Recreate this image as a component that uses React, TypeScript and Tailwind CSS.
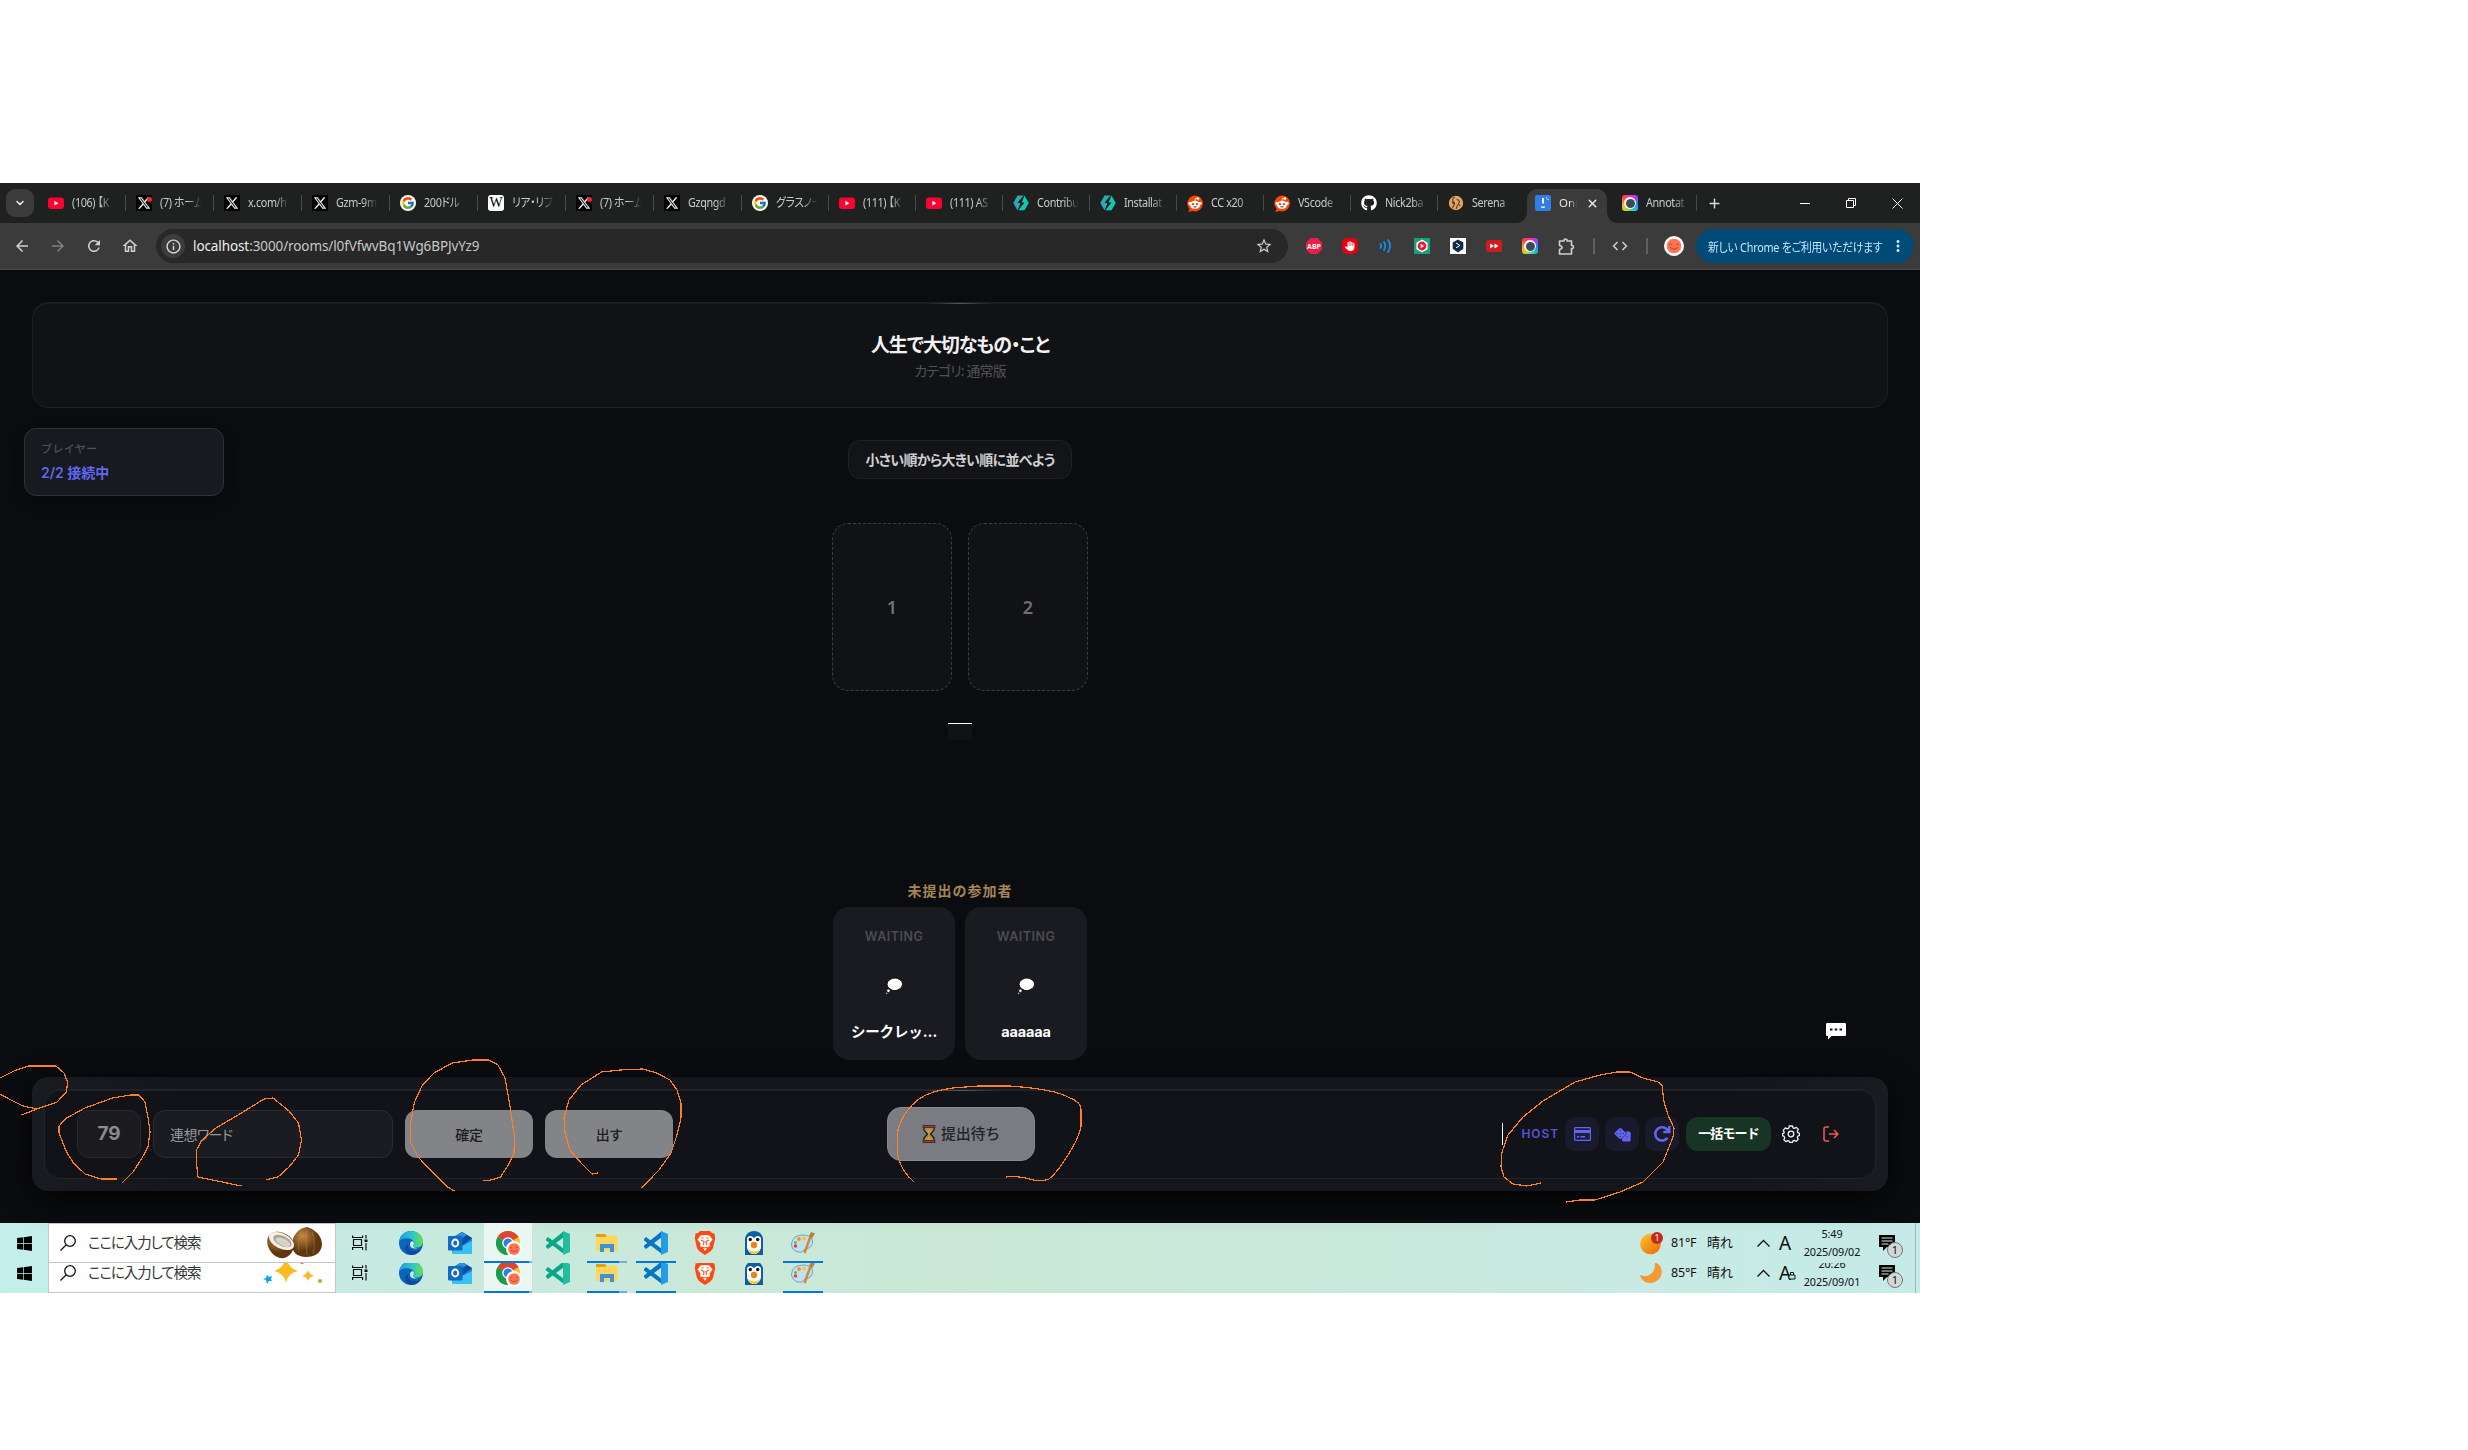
import React from "react";
import { LuX, LuPlus, LuChevronDown } from "react-icons/lu";
import { FaGithub } from "react-icons/fa";
import { FcGoogle } from "react-icons/fc";
import { FaXTwitter, FaWindows, FaHand } from "react-icons/fa6";
import { MdArrowBack, MdArrowForward, MdRefresh, MdOutlineHome, MdInfoOutline, MdStarOutline, MdCode, MdMoreVert } from "react-icons/md";

const ui = "font-['Noto_Sans','Noto_Sans_CJK_JP',sans-serif]";

const YouTube = () => (
  <svg width="16" height="16" viewBox="0 0 16 16"><rect y="2.5" width="16" height="11.5" rx="3" fill="#ff0033" /><path d="M6.4 5.8v4.8l4-2.4z" fill="#fff" /></svg>
);
const XIcon = ({ dot = false }: { dot?: boolean }) => (
  <span className="relative flex size-4 items-center justify-center bg-black">
    <FaXTwitter size={14} color="#e8e8e8" />
    {dot && <span className="absolute right-0 top-0.5 size-[5px] rounded-full bg-[#f4212e]" />}
  </span>
);
const Wiki = () => <span className="flex size-4 items-center justify-center rounded-[3px] bg-white font-['Liberation_Serif',serif] text-[14px] leading-none text-black">W</span>;
const Google = () => <span className="flex size-4 items-center justify-center rounded-full bg-white"><FcGoogle size={14} /></span>;
const Hex = () => (
  <svg width="16" height="16" viewBox="0 0 16 16"><path d="M4.500.500h6L5 7.200h3L4.500 15.200.300 8z" fill="#2fa8b5" /><path d="M11.500.500 8.500 8h2.300L5.500 15.200h6L15.700 8z" fill="#10c9ae" /><path d="M9.500 2.500 4.500 8h3l-1 5.300L11.500 7.500H8.600z" fill="#1f2120" /></svg>
);
const Reddit = () => (
  <svg width="16" height="17" viewBox="0 0 16 17"><path d="M8 .5a8 8 0 1 1-2.6 15.6L1 17l1.600-3A8 8 0 0 1 8 .5z" fill="#ff4500" /><ellipse cx="8" cy="9.800" rx="5.200" ry="4" fill="#fff" /><circle cx="2.900" cy="8.300" r="1.500" fill="#fff" /><circle cx="13.100" cy="8.300" r="1.500" fill="#fff" /><circle cx="11" cy="3.600" r="1.300" fill="#fff" /><path d="M8 6 8.700 3.200l2 .4" stroke="#fff" fill="none" strokeWidth=".8" /><circle cx="6" cy="9.200" r="1.100" fill="#e23b00" /><circle cx="10" cy="9.200" r="1.100" fill="#e23b00" /><path d="M5.800 11.500q2.200 1.800 4.400 0z" fill="#222" /></svg>
);
const Serena = () => (
  <svg width="16" height="16" viewBox="0 0 16 16"><circle cx="8" cy="8" r="7.200" fill="#dfa566" /><path d="M7 2C4 3 4 6 6 7.500S5 11 4.500 13M8.500 4.500c2.500 0 3.500 2 2.300 3.800S9 11 8 14M4 7l2 2M11 9.500l1 1.500" stroke="#5d3b1a" strokeWidth="1.100" fill="none" /></svg>
);
const Online = () => (
  <svg width="16" height="16" viewBox="0 0 16 16"><rect width="16" height="16" rx="2" fill="#2f7fe6" /><rect x="7" y="3" width="2" height="5.500" fill="#fff" /><path d="M6.200 11.500q1.800 1.600 3.600 0M11 3h1M13 4v1" stroke="#fff" strokeWidth="1.200" fill="none" /></svg>
);
const Lens = () => (
  <span className="flex size-4 items-center justify-center rounded-[3px] bg-[conic-gradient(#ff2fa0,#a13cff,#2d8cff,#14d9c8,#b8d92b,#ffb12b,#ff4340,#ff2fa0)]">
    <span className="flex size-3 items-center justify-center rounded-full bg-white"><span className="size-[9px] rounded-full bg-[#3d4b56]" /></span>
  </span>
);

const tabs: [React.ReactNode, string][] = [
  [<YouTube />, "(106) 【K"], [<XIcon dot />, "(7) ホーム"], [<XIcon />, "x.com/h"], [<XIcon />, "Gzm-9m"], [<Google />, "200ドル"],
  [<Wiki />, "リア・リプ"], [<XIcon dot />, "(7) ホーム"], [<XIcon />, "Gzqngd"], [<Google />, "グラスノー"], [<YouTube />, "(111) 【K"],
  [<YouTube />, "(111) AS"], [<Hex />, "Contribu"], [<Hex />, "Installat"], [<Reddit />, "CC x20"], [<Reddit />, "VScode"],
  [<FaGithub size={16} color="#fff" />, "Nick2ba"], [<Serena />, "Serena"],
];

function TabText({ children }: { children: React.ReactNode }) {
  return (
    <span className="ml-2 w-[42px] overflow-hidden whitespace-nowrap text-[12px] text-[#c9cbca] [font-feature-settings:'palt'] [mask-image:linear-gradient(to_right,black_65%,transparent)]">
      <span className="inline-block origin-left scale-x-90 tracking-[-0.4px]">{children}</span>
    </span>
  );
}

function TabStrip() {
  return (
    <div className="flex h-10 items-center bg-[#1f2120]">
      <div className="mx-1.5 flex h-7 w-7 items-center justify-center rounded-[9px] bg-[#3b3b3b]"><LuChevronDown size={12} color="#eee" strokeWidth={3} /></div>
      {tabs.map(([icon, label], i) => (
        <div key={i} className={i < 8 ? "flex h-10 w-[88px] shrink-0 items-center pl-2" : "flex h-10 w-[87px] shrink-0 items-center pl-2"}>
          <span className="flex w-4 shrink-0 justify-center">{icon}</span>
          <TabText>{label}</TabText>
          {i < tabs.length - 1 && <span className="ml-auto mr-0.5 h-4 w-px bg-[#494b4a]" />}
        </div>
      ))}
      <div className="relative mt-1.500 mt-[6px] flex h-[34px] w-20 shrink-0 items-center rounded-t-[10px] bg-[#3b3b3b] pb-1.500 pb-[6px] pl-2">
        <span className="absolute -left-2.5 bottom-0 size-2.5 bg-[radial-gradient(circle_at_0_0,transparent_9.5px,#3b3b3b_10px)]" />
        <span className="absolute -right-2.5 bottom-0 size-2.5 bg-[radial-gradient(circle_at_100%_0,transparent_9.5px,#3b3b3b_10px)]" />
        <Online />
        <span className="ml-2 w-[18px] overflow-hidden whitespace-nowrap text-[11.500px] text-[#e4e4e4] [mask-image:linear-gradient(to_right,black_60%,transparent)]">Onl</span>
        <LuX size={13} color="#eee" strokeWidth={2.6} className="ml-[9px]" />
      </div>
      <div className="flex h-10 w-[90px] items-center pl-[15px]"><Lens /><TabText>Annotat</TabText><span className="ml-auto h-4 w-px bg-[#494b4a]" /></div>
      <LuPlus size={15} color="#ddd" strokeWidth={2.2} className="ml-2.5" />
      <div className="ml-auto flex items-center gap-9 pr-[17px]">
        <span className="h-px w-2.5 bg-white" />
        <svg width="10" height="10" viewBox="0 0 10 10" fill="none" stroke="#fff"><path d="M.5 2.500h7v7h-7zM2.500 2.500v-2h7v7h-2" /></svg>
        <svg width="11" height="11" viewBox="0 0 11 11" fill="none" stroke="#fff"><path d="m.5.5 10 10m0-10-10 10" /></svg>
      </div>
    </div>
  );
}

function Face({ size }: { size: number }) {
  return (
    <svg width={size} height={size} viewBox="0 0 20 20"><circle cx="10" cy="10" r="10" fill="#fff" /><circle cx="10" cy="10" r="7.300" fill="#ff7351" /><path d="M5.800 11.200q4.200 4 8.400 0M5.200 8.400q1.600-1 2.600.4M12.200 8.800q1-1.400 2.600-.4" stroke="#b5412f" strokeWidth="1" fill="none" /></svg>
  );
}

function Toolbar() {
  return (
    <div className="flex h-[47px] items-center border-b border-[#4a4a48] bg-[#3b3b3b]">
      <div className="flex w-[156px] shrink-0 items-center gap-[18px] pl-[13px] text-[#d0d0d0]">
        <MdArrowBack size={18} /><MdArrowForward size={18} color="#808080" /><MdRefresh size={18} /><MdOutlineHome size={18} />
      </div>
      <div className="flex h-[34px] w-[1132px] shrink-0 items-center rounded-full bg-[#282828] pl-[5px] pr-[15px]">
        <span className="flex size-6 items-center justify-center rounded-full bg-[#3c3c3c]"><MdInfoOutline size={17} color="#d8d8d8" /></span>
        <span className="ml-2 whitespace-nowrap text-[13.500px] tracking-[-0.100px] text-[#c7c7c7]"><span className="text-[#eeeeee]">localhost</span>:3000/rooms/l0fVfwvBq1Wg6BPJvYz9</span>
        <MdStarOutline size={18} color="#d0d0d0" className="ml-auto" />
      </div>
      <div className="ml-2 flex shrink-0 items-center">
        <span className="flex w-9 justify-center"><svg width="16" height="16" viewBox="1 1 16 16"><path d="M5.500 1h7L17 5.500v7L12.500 17h-7L1 12.500v-7z" fill="#ed1e45" /><text x="9" y="11.600" textAnchor="middle" fontSize="7" fontWeight="700" fill="#fff">ABP</text></svg></span>
        <span className="flex w-9 justify-center"><span className="flex size-4 items-center justify-center rounded-[5px] bg-[#e60012]"><FaHand size={10} color="#fff" /></span></span>
        <span className="flex w-9 justify-center"><svg width="14" height="14" viewBox="0 0 14 14" fill="none" stroke="#118df0" strokeWidth="1.800" strokeLinecap="round"><path d="M1.500 5q1.200 2 0 4M5 3q2.600 4 0 8M9 1q4.200 6 0 12" /></svg></span>
        <span className="flex w-9 justify-center"><svg width="16" height="16" viewBox="0 0 16 16"><rect width="16" height="16" fill="#10a37f" /><path d="m8 1.500 5.600 3.200v6.600L8 14.500l-5.600-3.200V4.700z" fill="#fff" /><circle cx="8" cy="8" r="4.400" fill="#f01432" /><path d="M6.700 5.800v4.400L10.300 8z" fill="#fff" /></svg></span>
        <span className="flex w-9 justify-center"><svg width="16" height="16" viewBox="0 0 16 16"><rect width="16" height="16" fill="#fff" /><path d="m8 1.500 5.300 3v6.200L8 14.500l-5.300-3.800V4.500z" fill="#0f2b46" /><path d="m6 5 4 2.500-4 2.300" stroke="#fff" fill="none" /></svg></span>
        <span className="flex w-9 justify-center"><svg width="16" height="16" viewBox="0 0 16 16"><rect y="2" width="16" height="12" rx="2.500" fill="#cd1b20" /><path d="M4 5.500 8 8l-4 2.500zM8.500 5.500l4 2.500-4 2.500z" fill="#fff" /></svg></span>
        <span className="flex w-9 justify-center"><Lens /></span>
        <span className="flex w-9 justify-center"><svg width="17" height="17" viewBox="0 0 17 17" fill="none" stroke="#d0d0d0" strokeWidth="1.600" strokeLinejoin="round"><path d="M1.500 3H6V1.800q1.500-1.600 3 0V3h4.500v4.500h1.200q1.600 1.500 0 3h-1.200V16h-12v-4.500q2.500-.5 2.500-2t-2.500-2z" /></svg></span>
      </div>
      <span className="ml-[9px] h-4 w-0.5 shrink-0 bg-[#606060]" />
      <MdCode size={18} color="#d0d0d0" className="ml-4 shrink-0" />
      <span className="ml-[17px] h-4 w-0.5 shrink-0 bg-[#606060]" />
      <span className="ml-4 shrink-0"><Face size={20} /></span>
      <div className="ml-3 flex h-[34px] w-[218px] shrink-0 items-center rounded-full bg-[#004a77] pl-3">
        <span className="w-[177px] whitespace-nowrap"><span className="inline-block origin-left scale-x-[0.9] text-[12px] tracking-[-0.240px] text-[#c2e7ff] [font-feature-settings:'palt']">新しい Chrome をご利用いただけます</span></span>
        <MdMoreVert size={18} color="#c2e7ff" className="ml-1 shrink-0" />
      </div>
    </div>
  );
}

function Slot({ n }: { n: number }) {
  return <div className="flex h-[168px] w-[120px] items-center justify-center rounded-2xl border border-dashed border-[#3d3d40] bg-[#111216] text-[18px] font-semibold text-[#707073]">{n}</div>;
}

function Waiting({ name }: { name: string }) {
  return (
    <div className="flex h-[153px] w-[122px] flex-col items-center rounded-2xl bg-[#1a1b20]">
      <span className="mt-[21px] text-[12.500px] font-semibold leading-[18px] tracking-[0.500px] text-[#4b4b50]">WAITING</span>
      <svg width="20" height="20" viewBox="0 0 20 20" className="mt-[30px]"><path d="M11 2q2.500 0 4 1.200 3.800 1.600 3.600 5-.2 3.600-3.600 5-1.600 1.400-4.400 1.400-2.600 0-4-1.400Q3 11.800 3 8.200q0-3.400 3.400-4.800Q8.200 2 11 2z" fill="#fff" stroke="#000" strokeWidth=".9" /><circle cx="4.400" cy="14.800" r="1.700" fill="#fff" stroke="#000" strokeWidth=".6" /><circle cx="2.700" cy="17.300" r=".9" fill="#fff" stroke="#000" strokeWidth=".5" /></svg>
      <span className="mt-[26px] text-[14.500px] font-bold leading-5 tracking-[-0.150px] text-white">{name}</span>
    </div>
  );
}

function Footer() {
  const tool = "flex size-[34px] items-center justify-center rounded-[10px] bg-[#1a1a2d] text-[#6366f1]";
  return (
    <footer className="mx-8 mt-[17px] h-[114px] rounded-2xl bg-[linear-gradient(90deg,#181b20,#15161b_8%,#15161b_92%,#181b20)] p-3 shadow-[0_8px_28px_rgba(0,0,0,0.75)]">
      <div className="relative grid h-[90px] grid-cols-[1fr_148px_1fr] items-center rounded-2xl border border-[#232429] bg-[#121318] shadow-[inset_0_1px_0_#202126]">
        <span className="absolute left-1/2 top-0 h-px w-20 -translate-x-1/2 bg-linear-to-r from-transparent via-[#5a5b5e] to-transparent" />
        <div className="flex items-center gap-3 pl-8">
          <div className="flex h-12 w-16 items-center justify-center rounded-xl border border-[#2a2a2d] bg-[#1b1a1e] text-[19px] font-bold text-[#8b8b8e]">79</div>
          <div className="flex h-12 w-60 items-center rounded-xl border border-[#2b2c30] bg-[#1b1c21] pl-4 text-[14px] tracking-[-0.600px] text-[#96979a] [font-feature-settings:'palt']">連想ワード</div>
          <button className="h-12 w-32 rounded-xl bg-[#838487] text-[14px] font-medium tracking-[-0.300px] text-[#1c1d21]">確定</button>
          <button className="h-12 w-32 rounded-xl bg-[#838487] text-[14px] font-medium tracking-[-0.800px] text-[#1c1d21]">出す</button>
        </div>
        <button className="ml-px flex h-[54px] w-[148px] items-center justify-center gap-[5px] rounded-[14px] border border-[#88898d] bg-[#7b7c81] text-[15px] font-medium text-[#232428]">
          <svg width="14" height="18" viewBox="0 0 14 18"><path d="M2 2h10v3L8.500 9l3.500 4v3H2v-3l3.500-4L2 5z" fill="#a08a62" stroke="#191a1d" strokeWidth="1.300" /><path d="M3 5h8L7.500 8.700v3L11 15H3l3.500-3.500V9z" fill="#c9952d" /><path d="M.7 1.700h12.600M.7 16.300h12.600" stroke="#191a1d" strokeWidth="2.700" /><path d="M1.200 1.700h11.600M1.200 16.300h11.600" stroke="#a6382c" strokeWidth="1.400" /></svg>
          <span className="tracking-[-0.300px]">提出待ち</span>
        </button>
        <div className="flex items-center justify-end pr-[35px]">
          <span className="mr-[19px] h-[22px] w-px bg-white" />
          <span className="mr-[6px] text-[12px] font-semibold tracking-[0.900px] text-[#5557d6]">HOST</span>
          <div className="flex gap-1.5">
            <span className={tool}><svg width="17" height="14" viewBox="0 0 17 14"><rect x=".6" y=".6" width="15.800" height="12.800" rx="1" fill="#1d1d3c" stroke="currentColor" strokeWidth="1.200" /><path d="M1 3h15v3H1z" fill="currentColor" /><path d="M3 9.800h2.200M6.500 9.800h4.500" stroke="currentColor" strokeWidth="1.400" /></svg></span>
            <span className={tool}><svg width="17" height="15" viewBox="0 0 17 15"><path d="M12 4.500h3q1.700 0 1.700 1.700V13q0 1.500-1.500 1.500H9.500Q8 14.500 8 13V9z" fill="currentColor" /><path d="M5.400.900q.9-.9 1.800 0l4.700 4.700q.9.900 0 1.800L7.200 12.100q-.9.900-1.800 0L.7 7.400q-.9-.9 0-1.800z" fill="currentColor" stroke="#1a1a2d" strokeWidth=".6" /><g fill="#31339a"><circle cx="6.300" cy="3.500" r=".8" /><circle cx="3.300" cy="6.500" r=".8" /><circle cx="6.300" cy="6.500" r=".8" /><circle cx="9.300" cy="6.500" r=".8" /><circle cx="6.300" cy="9.500" r=".8" /><circle cx="13" cy="10" r=".8" /></g></svg></span>
            <span className={tool}><svg width="18" height="18" viewBox="0 0 18 18" fill="none" stroke="currentColor"><path d="M14.500 12.700A6.700 6.700 0 1 1 13.600 4l2 2" strokeWidth="2.500" /><path d="M16.300 1v6h-6" strokeWidth="2.500" /></svg></span>
          </div>
          <span className="ml-[7px] flex h-[34px] w-[85px] items-center justify-center rounded-xl bg-[#173424] text-[13px] font-bold tracking-[-0.900px] text-white">一括モード</span>
          <svg className="ml-[11px]" width="18" height="18" viewBox="0 0 18 18" fill="none" stroke="#f1f1f1" strokeWidth="1.300" strokeLinejoin="round"><circle cx="9" cy="9" r="2.800" /><path d="m7.300 1-.5 2.100-1.500.7-2-1L1.200 5.300l1 1.900-.4 1-1.300.5v2l1.500.6.7 1.400-.8 2 2 1.900 2-1 1.300.5.6 1.300h2.600l.6-1.500 1.300-.5 2 1 1.900-2-.9-1.900.6-1.400 1.600-.6V8.300l-1.600-.6-.6-1.400 1-2-2-1.900-2 1-1.300-.6L10.500 1z" /></svg>
          <svg className="ml-[23px] mr-px" width="16" height="16" viewBox="0 0 16 16" fill="none" stroke="#ee5b58" strokeWidth="1.500"><path d="M6 1H3Q1 1 1 3v10q0 2 2 2h3M6 8h9M11 4l4 4-4 4" /></svg>
        </div>
      </div>
    </footer>
  );
}

function Page() {
  return (
    <div className="relative flex h-[953px] flex-col bg-[#0b0c10] font-['Inter','Noto_Sans_CJK_JP',sans-serif]">
      <header className="relative mx-8 mt-8 flex h-[106px] flex-col items-center rounded-2xl border border-[#1f2024] bg-[#111216] pt-[29px] font-['Noto_Sans','Noto_Sans_CJK_JP',sans-serif] shadow-[inset_0_1px_0_#1b1c20]">
        <span className="absolute left-1/2 top-0 h-px w-15 -translate-x-1/2 bg-linear-to-r from-transparent via-[#56575a] to-transparent" />
        <h1 className="text-[19px] font-semibold leading-[27px] tracking-[-1.100px] text-[#f1f1f1] [font-feature-settings:'palt']">人生で大切なもの・こと</h1>
        <p className="text-[14px] leading-[23px] tracking-[-0.900px] text-[#515257] [font-feature-settings:'palt']">カテゴリ: 通常版</p>
      </header>
      <div className="mt-5 flex h-[68px] pl-6">
        <aside className="flex w-[200px] flex-col rounded-xl border border-[#2e3034] bg-[#171a1e] pl-4 pt-[11px] shadow-[0_6px_14px_rgba(0,0,0,0.2)]">
          <span className="text-[11px] font-medium leading-[18px] tracking-[0.400px] text-[#505156]">プレイヤー</span>
          <span className="mt-1 text-[14px] font-semibold leading-[22px] text-[#6366f1]">2/2 接続中</span>
        </aside>
        <div className="ml-[624px] mt-3 flex h-[39px] w-56 items-center justify-center rounded-xl border border-[#202124] bg-[#131417] font-['Noto_Sans','Noto_Sans_CJK_JP',sans-serif] text-[14px] font-semibold tracking-[-0.700px] text-[#cfcfd0] [font-feature-settings:'palt']">小さい順から大きい順に並べよう</div>
      </div>
      <div className="mt-[27px] flex justify-center gap-4 font-['Noto_Sans',sans-serif]"><Slot n={1} /><Slot n={2} /></div>
      <div className="mx-auto mt-8 h-[17px] w-6 shrink-0 border-t border-white bg-[#111216]" />
      <div className="mt-[138px] h-[29px] text-center text-[14px] font-semibold leading-[26px] tracking-[1px] text-[#a38557]">未提出の参加者</div>
      <div className="relative flex justify-center gap-2.5">
        <Waiting name="シークレッ…" /><Waiting name="aaaaaa" />
        <svg width="22" height="20" viewBox="0 0 22 20" className="absolute right-[73px] top-[115px]"><path d="M2 1h18q1 0 1 1v11q0 1-1 1H6.500L3 17.500V14H2q-1 0-1-1V2q0-1 1-1z" fill="#fff" /><path d="M5 7.500h2.500M9.700 7.500h2.500M14.500 7.500H17" stroke="#111" strokeWidth="2.200" /></svg>
      </div>
      <Footer />
    </div>
  );
}

const Edge = () => (
  <svg width="24" height="24" viewBox="0 0 24 24"><defs><linearGradient id="edgeTop" x2="1"><stop stopColor="#1b9de2" /><stop offset=".55" stopColor="#2fc5c9" /><stop offset="1" stopColor="#6be04c" /></linearGradient></defs><circle cx="12" cy="12" r="12" fill="#0c65bd" /><path d="M0 11C1 4 6 0 12 0c7 0 12 5 12 10.500 0 4-3 6-6.500 6-3.500 0-4-1.500-2.500-3 .5-1 .5-3-1.500-4.500C10 6.500 3 6.500 0 11z" fill="url(#edgeTop)" /><path d="M9 13c-1 6 5 9.500 13 5.500C19 23 15 24 12 24 6 23 4 16 9 13z" fill="#10499b" /><path d="M13.500 10c2 1.500 1.500 3 1 3.700-1.200 2 .7 3.300 4 3.200-4 1.800-7.500-.4-7.500-3.500 0-1.600.9-3.100 2.500-3.400z" fill="#d1f1eb" /></svg>
);
const Outlook = () => (
  <svg width="24" height="24" viewBox="0 0 24 24"><path d="M4 7 14 1l10 6v14q0 2-2 2H6q-2 0-2-2z" fill="#1a84d8" /><path d="M4 7 14 1l10 6-9 7z" fill="#0a4ea0" /><path d="M5 6.500 14 1l5 3-9 6z" fill="#2d8fe0" /><path d="m4 20 20-10v11q0 2-2 2H6q-2 0-2-2z" fill="#38c1f4" /><rect y="5" width="14.500" height="14.500" rx="1" fill="#0f6cc4" /><ellipse cx="7.200" cy="12" rx="3" ry="3.500" fill="none" stroke="#fff" strokeWidth="1.900" /></svg>
);
const Chrome = () => (
  <span className="relative block size-6"><svg width="24" height="24" viewBox="0 0 24 24"><circle cx="12" cy="12" r="12" fill="#fbc116" /><path d="M12 12 1.600 6A12 12 0 0 1 22.400 6z" fill="#db4437" /><path d="M12 12 1.600 6A12 12 0 0 0 12 24l5-9z" fill="#179c52" /><circle cx="12" cy="12" r="5.800" fill="#fff" /><circle cx="12" cy="12" r="4.500" fill="#2b7de9" /></svg><span className="absolute -bottom-[2px] -right-[2px]"><Face size={16} /></span></span>
);
const Code = ({ a, b }: { a: string; b: string }) => (
  <svg width="24" height="24" viewBox="0 0 24 24"><path d="M0 8 2 6l16 12v5L0 9.500z" fill={a} /><path d="m0 16 2 2L18 6V0L0 14.500z" fill={a} /><path d="m17 0 7 3v18l-7 3z" fill={b} /></svg>
);
const Explorer = () => (
  <svg width="24" height="24" viewBox="0 0 24 24"><path d="M1 3h9l2 2h10v4H1z" fill="#e2a013" /><path d="M1 6h9l2-1.500h10.500V20H1z" fill="#ffd65c" /><path d="M5 13h14v8h-4v-4H9v4H5z" fill="#3d92dc" /></svg>
);
const Brave = () => (
  <svg width="24" height="24" viewBox="0 0 24 24"><path d="M7 0h10l2 2 2.500.5.700 5L20 17q-1 3-8 7-7-4-8-7L1.800 7.500l.7-5L5 2z" fill="#fb4a15" /><path d="M7.500 4.500 12 4l4.500.5 3 4-3 4 .5 2.500-3 2-2 3-2-3-3-2 .5-2.500-3-4z" fill="#fff" /><path d="m8 9 3 1.500-.5 3.500M16 9l-3 1.500.5 3.500M9 16l3 1 3-1M8.500 7h2M13.500 7h2" stroke="#fb4a15" strokeWidth="1.100" fill="none" /></svg>
);
const Penguin = () => (
  <svg width="18" height="24" viewBox="0 0 18 24"><path d="M0 24V7Q2 0 9 0t9 7v17z" fill="#0d5da8" /><path d="M2 7q3-4 7 0 4-4 7 0v10q-2 6-7 6t-7-6z" fill="#fff" /><circle cx="5.300" cy="8.500" r="1.700" fill="#111" /><circle cx="12.700" cy="8.500" r="1.700" fill="#111" /><path d="M3 18q6 5 12 0-2 5-6 5t-6-5z" fill="#ffc81e" /><circle cx="9" cy="14" r="3.200" fill="#ee8419" /></svg>
);
const Paint = () => (
  <svg width="24" height="24" viewBox="0 0 24 24"><path d="M12 4q9 0 9.500 6t-6.500 8q-2 0-3 2-1 2-5 1-6.500-2-6.500-8 1-9 11.500-9z" fill="#bfe1f2" stroke="#70a5c4" /><circle cx="8" cy="8" r="1.900" fill="#ff8b21" /><circle cx="13" cy="7.500" r="1.900" fill="#ffc61c" /><circle cx="4.500" cy="15" r="1.800" fill="#e34435" /><circle cx="4.500" cy="11.500" r="1.500" fill="#65b946" /><path d="M20 4 13.500 22" stroke="#d48632" strokeWidth="2.400" /><path d="m18 5 2-4 4 1.500-3 5z" fill="#b98048" /></svg>
);

const apps: { icon: React.ReactNode; bar?: string; active?: boolean }[] = [
  { icon: <Edge /> },
  { icon: <Outlook /> },
  { icon: <Chrome />, active: true, bar: "w-12 bg-[linear-gradient(90deg,#0078d7_45px,#6fb1e6_45px)]" },
  { icon: <Code a="#08a887" b="#20bd9f" /> },
  { icon: <Explorer />, bar: "w-10 bg-[linear-gradient(90deg,#0078d7_32px,#6fb1e6_32px)]" },
  { icon: <Code a="#0875c5" b="#249de9" />, bar: "w-10 bg-[#0078d7]" },
  { icon: <Brave /> },
  { icon: <Penguin /> },
  { icon: <Paint />, bar: "w-10 bg-[#0078d7]" },
];

const Coconut = () => (
  <svg width="56" height="32" viewBox="0 0 56 32"><defs><radialGradient id="coco" cx=".35" cy=".3"><stop stopColor="#c58a3f" /><stop offset="1" stopColor="#5e3711" /></radialGradient></defs><path d="M25 18C25 8 32 1 40 0c9 3 15 9 15 18-1 8-7 12-16 12s-14-5-14-12z" fill="url(#coco)" /><path d="M35 4q-5 10-3 21M40 3q-2 12 0 25M45 5q4 10 1 22" stroke="#d09a55" strokeWidth=".6" fill="none" opacity=".6" /><path d="M.500 12C2 6 7 4 13 5c9 2 15 8 14 15-2 8-8 12-14 11C5 29-1 20 .5 12z" fill="url(#coco)" /><ellipse cx="14.500" cy="14" rx="13.500" ry="7.500" transform="rotate(27 14.500 14)" fill="#f4eee3" /><ellipse cx="15.500" cy="14" rx="10" ry="5" transform="rotate(27 15.500 14)" fill="#aaa69a" /><ellipse cx="16" cy="15.200" rx="8" ry="3.500" transform="rotate(27 16 15.200)" fill="#d8d3c8" /></svg>
);
const Sparkles = () => (
  <svg width="62" height="36" viewBox="0 -6 62 36"><path d="M25-4q2 11 12 14-10 2-12 12-2-10-12-12 10-3 12-14z" fill="#fdbb20" /><path d="M47 9q1 4 6 6-5 1-6 5-1-4-6-5 5-2 6-6z" fill="#fcb72a" /><path d="m6 14 2 2 3-1-1 3 1 2-3 0-2 3-1-4-3-1 3-1z" fill="#0ea5e9" /><circle cx="59" cy="20" r="2" fill="#84c441" /><circle cx="41" cy="1" r="2" fill="#f2542d" /></svg>
);

type BarProps = { art: React.ReactNode; weather: React.ReactNode; temp: string; time: string; date: string; locked?: boolean };

function Taskbar({ art, weather, temp, time, date, locked }: BarProps) {
  return (
    <div className="flex h-10 shrink-0 items-center bg-[linear-gradient(90deg,#c3eeea,#c9e9dc_30%,#cae8d5_50%,#c9e9de_75%,#c5ebe8)] text-[#111]">
      <span className="flex w-12 justify-center"><FaWindows size={17} color="#000" /></span>
      <div className="flex h-10 w-72 shrink-0 items-center border border-[#c6c6c6] bg-white pl-[11px]">
        <svg width="16" height="16" viewBox="0 0 16 16" fill="none" stroke="#111" strokeWidth="1.300"><circle cx="10" cy="6" r="5.300" /><path d="M6 10 .5 15.500" /></svg>
        <span className="ml-3 whitespace-nowrap text-[14.500px] tracking-[-1.100px] text-[#333] [font-feature-settings:'palt']">ここに入力して検索</span>
        <span className="ml-auto mr-3">{art}</span>
      </div>
      <span className="flex w-[50px] shrink-0 pl-4"><svg width="16" height="16" viewBox="0 0 16 16" fill="none" stroke="#111" strokeWidth="1.200" className="shrink-0"><path d="M.6.500v2h10v-2M1.500 4.500h8v6h-8zM.6 15v-2.500h10V15M14 0v3.500M14 8v7.500" /><path d="M12.500 4.500h3v2.500h-3z" fill="#111" stroke="none" /></svg></span>
      {apps.map((a, i) => (
        <div key={i} className={a.active ? "relative flex h-10 w-[49px] items-center justify-center border-r border-[#d3ded9] bg-[#e9f6f2]" : "relative flex h-10 w-[49px] items-center justify-center"}>
          {a.icon}
          {a.bar && <span className={"absolute bottom-0 h-0.5 " + a.bar} />}
        </div>
      ))}
      <div className="ml-auto flex items-center pr-1">
        <span className="mr-[7px] w-6">{weather}</span>
        <span className="w-9 whitespace-nowrap text-[12.500px] tracking-[-0.200px]">{temp}</span>
        <span className="w-12 whitespace-nowrap text-[13px]">晴れ</span>
        <svg width="17" height="17" viewBox="0 0 17 17" fill="none" stroke="#111" strokeWidth="1.300"><path d="m2.500 11.500 6-6 6 6" /></svg>
        <span className="ml-[7px] flex w-[21px] items-end text-[19px] leading-none"><span className="inline-block w-[12px]">A</span>{locked && <svg width="8" height="9" viewBox="0 0 8 9" className="mb-[3px] -ml-[3px] shrink-0"><path d="M1 4h6v4H1zM2.500 4V1.500h3V4" fill="#c5ebe8" stroke="#111" /></svg>}</span>
        <span className="flex w-[64px] flex-col items-center whitespace-nowrap text-[10.800px] leading-[18px] tracking-[-0.100px]"><span>{time}</span><span>{date}</span></span>
        <span className="relative ml-[15px] mr-5 block"><svg width="16" height="16" viewBox="0 0 16 16"><path d="M0 0h16v12H8l-4 4v-4H0z" fill="#000" /><path d="M2.500 3h11M2.500 6h11M2.500 9h7" stroke="#d5eee9" /></svg><span className="absolute -right-[8px] top-[7px] flex size-4 items-center justify-center rounded-full border border-[#777] bg-[#d3d7d7] text-[11px]">1</span></span>
        <span className="h-10 w-px bg-[#9fbdb8]" />
      </div>
    </div>
  );
}

const Sun = () => (
  <svg width="24" height="24" viewBox="0 0 24 24"><defs><linearGradient id="sunFill" x2=".7" y2="1"><stop stopColor="#ffc62b" /><stop offset="1" stopColor="#ed7410" /></linearGradient></defs><circle cx="10.500" cy="13" r="10.300" fill="url(#sunFill)" /><circle cx="17" cy="7" r="6" fill="#c42b1c" /><text x="17" y="10" textAnchor="middle" fontSize="8" fill="#fff">1</text></svg>
);
const Moon = () => (
  <svg width="24" height="24" viewBox="0 0 24 24"><path d="M14.500 1C24 4 24 17 15 21 8 24 1 20 0 14c8 4 17-3 14.500-13z" fill="#f49a32" /></svg>
);

const strokes = [
  "M0 1078 14 1071 28 1066H56L64 1073 67.500 1082 66.500 1092 57 1102 37 1109 21.500 1115M37 1109 23 1106 9 1099 0 1094",
  "M117 1179H101L85 1174 73.500 1163 66.500 1152 59 1133V1126L66.500 1118 85 1108 112.500 1098 131 1095H139L145 1102 148 1117 150 1132 148 1147 142 1158 133 1172 122 1183",
  "M241.500 1186 227 1183 198 1177 196.500 1163V1150L202 1140 216 1128 243 1112 264 1099 273 1098 289 1111 298.500 1123 301.500 1140 298.500 1155 289 1167 278 1177 266 1180",
  "M454.500 1191 447.500 1187 431.500 1171 418 1157 410.500 1142V1123L414.500 1102 422.500 1085 434 1073 452 1063 473 1060H489L498 1065 505 1078 509.500 1103 514.500 1137 514 1153 509.500 1163 500.500 1177 491 1180 483.500 1181",
  "M598 1173 592 1174 581 1163 570 1150 565 1133 564 1117 569 1100 581 1085 601.500 1072 620 1070 643 1069 656.500 1073 670 1080 677 1090 681 1103V1118L677 1135 671 1153 659 1170 641.500 1188",
  "M914 1182q-12-10-16-25-1-10 0-28 6-19 21-30 11-8 34-11l25-2 31 0q45 3 59 11 13 5 13 12v18q-3 13-13 28-11 18-19 24-9 4-23-1-10-2-20-1",
  "M1541 1183 1527 1186 1513 1184 1504 1177 1501 1167 1502 1152 1508 1135 1523 1117 1543 1101 1575 1082 1600 1075 1617 1072H1630L1643 1078 1658 1082 1662 1085 1664 1102 1668 1115 1674 1128 1673 1137 1663 1162 1643 1182 1620 1192 1595 1200 1580 1200 1566 1202",
];

export default function App() {
  return (
    <div className={"h-[1450px] w-[2468px] overflow-hidden bg-white pt-[183px] " + ui}>
      <main className="relative w-[1920px]">
        <TabStrip />
        <Toolbar />
        <Page />
        <Taskbar art={<Coconut />} weather={<Sun />} temp="81°F" time="5:49" date="2025/09/02" />
        <div className="flex h-[30px] items-end overflow-hidden"><div className="w-full"><Taskbar art={<Sparkles />} weather={<Moon />} temp="85°F" time="20:26" date="2025/09/01" locked /></div></div>
        <svg className="pointer-events-none absolute left-0 top-0" width="1920" height="1110" viewBox="0 183 1920 1110" fill="none" stroke="#ff7f27" strokeWidth="1.200" strokeLinejoin="round" shapeRendering="crispEdges">
          {strokes.map((d) => <path key={d} d={d} />)}
        </svg>
      </main>
    </div>
  );
}
